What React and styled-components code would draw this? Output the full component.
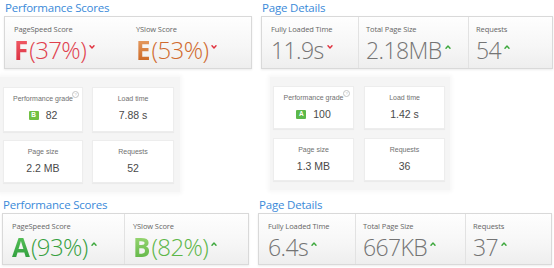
import styled, { createGlobalStyle } from "styled-components";

const GlobalStyle = createGlobalStyle`
  html, body {
    margin: 0;
    padding: 0;
    background: #ffffff;
  }
  body {
    width: 554px;
    height: 268px;
    overflow: hidden;
    font-family: "Open Sans", "DejaVu Sans", sans-serif;
  }
`;

const Page = styled.div`
  display: flex;
  flex-direction: column;
  width: 554px;
`;

const ReportRow = styled.div`
  display: flex;
  align-items: flex-start;
  gap: ${(p) => p.gap}px;
  padding: ${(p) => p.pad};
`;

const Section = styled.div`
  display: flex;
  flex-direction: column;
  width: ${(p) => p.width}px;
`;

const SectionTitle = styled.div`
  font-size: 11.5px;
  line-height: 12px;
  height: 12px;
  color: #3a8ad9;
  margin: 0 0 2px 1px;
  letter-spacing: -0.2px;
`;

const ScoreBox = styled.div`
  display: flex;
  height: ${(p) => p.height}px;
  border: 1px solid #d9d9d9;
  background: linear-gradient(#fefefe, #f6f6f6 60%, #eeeeee);
  box-shadow: 0 1px 2px rgba(0, 0, 0, 0.08);
  box-sizing: border-box;
`;

const ScoreCell = styled.div`
  display: flex;
  flex-direction: column;
  width: ${(p) => (p.width ? `${p.width}px` : "auto")};
  flex: ${(p) => (p.width ? "none" : "1")};
  padding: 7px 0 0 ${(p) => p.padLeft}px;
  box-sizing: border-box;
  border-left: 1px solid ${(p) => (p.divider ? "#e2e2e2" : "transparent")};
`;

const ScoreLabel = styled.div`
  font-size: 7.5px;
  line-height: 10px;
  color: #666;
  letter-spacing: -0.1px;
`;

const ScoreValue = styled.div`
  display: flex;
  align-items: center;
  margin-top: ${(p) => p.top}px;
  font-size: ${(p) => p.size}px;
  line-height: 28px;
  font-weight: 300;
  color: ${(p) => p.color};
  letter-spacing: -0.6px;
`;

const Grade = styled.span`
  font-weight: 700;
  font-size: 1.08em;
  background: ${(p) => p.fill};
  -webkit-background-clip: text;
  background-clip: text;
  color: transparent;
  letter-spacing: 0;
  margin-right: 1px;
`;

const Caret = styled.svg`
  width: 6px;
  height: 4px;
  margin: 0 0 6px 3px;
  flex: none;
`;

const MidRow = styled.div`
  display: flex;
  align-items: flex-start;
  gap: 90px;
  margin-top: 8px;
  height: 115px;
`;

const Panel = styled.div`
  display: grid;
  grid-template-columns: ${(p) => p.cols};
  grid-template-rows: ${(p) => p.rows};
  gap: ${(p) => p.gap};
  padding: ${(p) => p.pad};
  background: #f5f5f5;
  box-shadow: 0 0 4px 2px #f7f7f7;
  font-family: "Liberation Sans", Arial, sans-serif;
`;

const StatCard = styled.div`
  position: relative;
  display: flex;
  flex-direction: column;
  align-items: center;
  background: #ffffff;
  border: 1px solid #ededed;
  box-shadow: 0 1px 1px rgba(0, 0, 0, 0.04);
  box-sizing: border-box;
  padding-top: 6px;
`;

const StatLabel = styled.div`
  font-size: 7px;
  line-height: 10px;
  color: #707070;
`;

const StatValue = styled.div`
  display: flex;
  align-items: center;
  gap: 7px;
  margin-top: 5px;
  font-size: 10.5px;
  line-height: 12px;
  color: #4a4a4a;
`;

const Badge = styled.span`
  display: inline-flex;
  align-items: center;
  justify-content: center;
  width: 10px;
  height: 9px;
  border-radius: 1px;
  background: ${(p) => p.color};
  color: #fff;
  font-size: 6.5px;
  font-weight: 700;
`;

const HelpIcon = styled.span`
  position: absolute;
  top: 3px;
  right: 3px;
  width: 5px;
  height: 5px;
  border: 1px solid #c4c4c4;
  border-radius: 50%;
  font-size: 4px;
  line-height: 5px;
  text-align: center;
  color: #bbb;
`;

function Arrow({ up }) {
  return (
    <Caret viewBox="0 0 7 5">
      <path
        d={up ? "M1 4 L3.5 1.3 L6 4" : "M1 1 L3.5 3.7 L6 1"}
        fill="none"
        stroke={up ? "#3da83d" : "#e0323f"}
        strokeWidth="1.8"
        strokeLinecap="round"
        strokeLinejoin="round"
      />
    </Caret>
  );
}

const FILLS = {
  F: { fill: "linear-gradient(#f4616a, #d72a3d)", color: "#e0404d" },
  E: { fill: "linear-gradient(#e9a46c, #c9611c)", color: "#d06a2e" },
  A: { fill: "linear-gradient(#5cc65a, #2c9a3c)", color: "#37a03f" },
  B: { fill: "linear-gradient(#a0da78, #5db444)", color: "#5cb648" },
};

function PerformanceScores({ width, height, scores }) {
  return (
    <Section width={width}>
      <SectionTitle>Performance Scores</SectionTitle>
      <ScoreBox height={height}>
        {scores.map((s, i) => (
          <ScoreCell key={s.label} width={i === 0 ? s.width : null} padLeft={8} divider={s.divider}>
            <ScoreLabel>{s.label}</ScoreLabel>
            <ScoreValue size={24} top={2} color={FILLS[s.grade].color}>
              <Grade fill={FILLS[s.grade].fill}>{s.grade}</Grade>({s.pct}%)
              <Arrow up={s.up} />
            </ScoreValue>
          </ScoreCell>
        ))}
      </ScoreBox>
    </Section>
  );
}

function PageDetails({ width, height, cols, items }) {
  return (
    <Section width={width}>
      <SectionTitle>Page Details</SectionTitle>
      <ScoreBox height={height}>
        {items.map((it, i) => (
          <ScoreCell key={it.label} width={cols[i]} padLeft={i === 0 ? 8 : 7} divider={i > 0}>
            <ScoreLabel>{it.label}</ScoreLabel>
            <ScoreValue size={23} top={2} color="#747474">
              {it.value}
              <Arrow up={it.up} />
            </ScoreValue>
          </ScoreCell>
        ))}
      </ScoreBox>
    </Section>
  );
}

function StatsPanel({ grade, score, load, size, requests, layout }) {
  return (
    <Panel {...layout}>
      <StatCard>
        <StatLabel>Performance grade</StatLabel>
        <StatValue>
          <Badge color={grade === "A" ? "#5bb84a" : "#72c043"}>{grade}</Badge>
          {score}
        </StatValue>
        <HelpIcon>?</HelpIcon>
      </StatCard>
      <StatCard>
        <StatLabel>Load time</StatLabel>
        <StatValue>{load}</StatValue>
      </StatCard>
      <StatCard>
        <StatLabel>Page size</StatLabel>
        <StatValue>{size}</StatValue>
      </StatCard>
      <StatCard>
        <StatLabel>Requests</StatLabel>
        <StatValue>{requests}</StatValue>
      </StatCard>
    </Panel>
  );
}

export default function App() {
  return (
    <Page>
      <GlobalStyle />
      <ReportRow gap={9} pad="2px 0 0 4px">
        <PerformanceScores
          width={248}
          height={53}
          scores={[
            { label: "PageSpeed Score", grade: "F", pct: 37, up: false, width: 122 },
            { label: "YSlow Score", grade: "E", pct: 53, up: false },
          ]}
        />
        <PageDetails
          width={292}
          height={53}
          cols={[96, 110, null]}
          items={[
            { label: "Fully Loaded Time", value: "11.9s", up: false },
            { label: "Total Page Size", value: "2.18MB", up: true },
            { label: "Requests", value: "54", up: true },
          ]}
        />
      </ReportRow>
      <MidRow>
        <StatsPanel
          grade="B"
          score="82"
          load="7.88 s"
          size="2.2 MB"
          requests="52"
          layout={{ cols: "80px 82px", rows: "45px 43px", gap: "8px 9px", pad: "10px 6px 9px 3px" }}
        />
        <StatsPanel
          grade="A"
          score="100"
          load="1.42 s"
          size="1.3 MB"
          requests="36"
          layout={{ cols: "81px 81px", rows: "43px 43px", gap: "9px 10px", pad: "9px 5px 9px 3px" }}
        />
      </MidRow>
      <ReportRow gap={9} pad="7px 0 0 2px">
        <PerformanceScores
          width={247}
          height={52}
          scores={[
            { label: "PageSpeed Score", grade: "A", pct: 93, up: true, width: 121 },
            { label: "YSlow Score", grade: "B", pct: 82, up: true, divider: true },
          ]}
        />
        <PageDetails
          width={294}
          height={52}
          cols={[96, 110, null]}
          items={[
            { label: "Fully Loaded Time", value: "6.4s", up: true },
            { label: "Total Page Size", value: "667KB", up: true },
            { label: "Requests", value: "37", up: true },
          ]}
        />
      </ReportRow>
    </Page>
  );
}
